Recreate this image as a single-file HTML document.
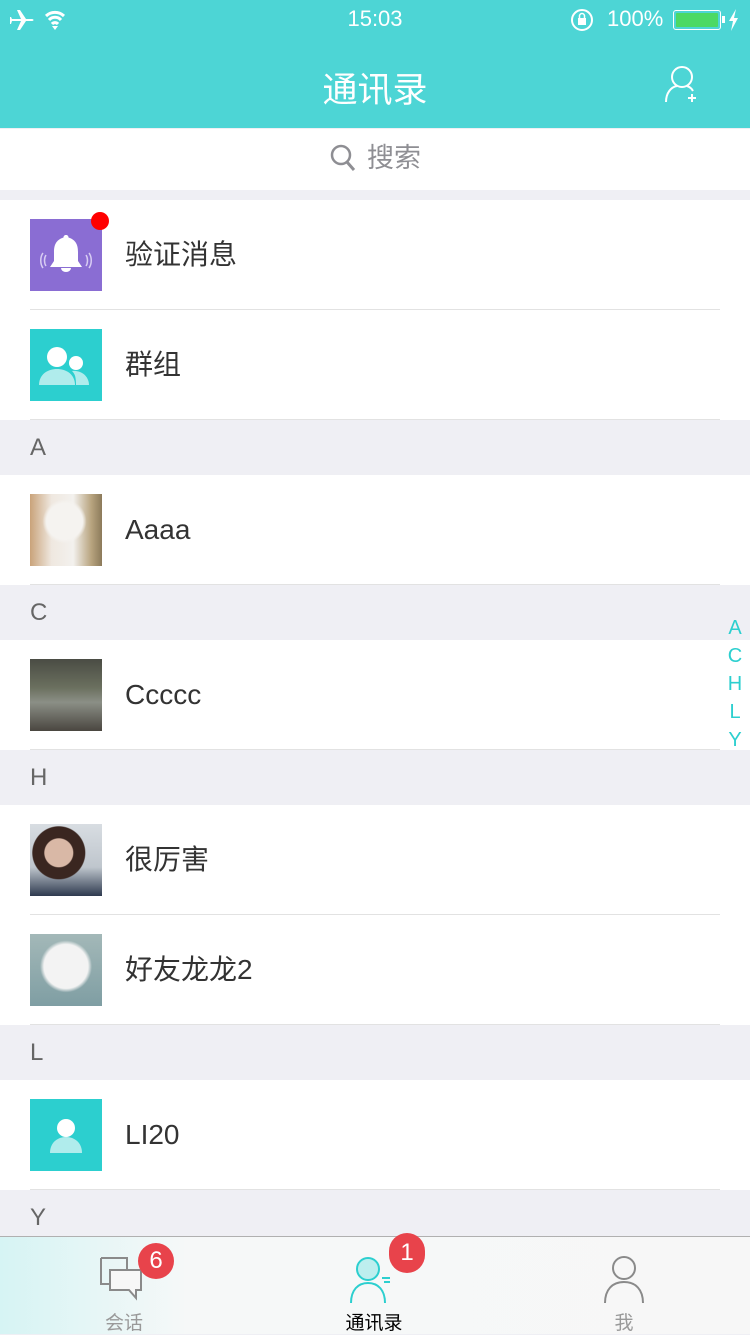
<!DOCTYPE html>
<html><head><meta charset="utf-8"><style>
*{margin:0;padding:0;box-sizing:border-box}
body{width:750px;height:1334px;overflow:hidden;background:#efeff4;font-family:"Liberation Sans","Noto Sans CJK SC",sans-serif;position:relative}
.top{position:absolute;left:0;top:0;width:750px;height:128px;background:#4dd5d5;color:#fff}
.search{position:absolute;top:129px;left:0;width:750px;height:61px;background:#fff;text-align:center;color:#8e8e93;font-size:27px;line-height:58px}
.row{position:absolute;left:0;width:750px;height:110px;background:#fff}
.row .av{position:absolute;left:30px;top:19px;width:72px;height:72px}
.row .t{position:absolute;left:125px;top:0;line-height:110px;font-size:28px;color:#333}
.row .ln{position:absolute;left:30px;right:30px;bottom:0;height:1px;background:#e2e2e2}
.hd{position:absolute;left:0;width:750px;height:55px;background:#efeff4;color:#666;font-size:24px;line-height:55px;padding-left:30px}
.idx{position:absolute;left:727px;top:614px;width:16px;text-align:center;color:#2ccfcf;font-size:20px;line-height:28px}
.tab{position:absolute;left:0;top:1236px;width:750px;height:98px;background:linear-gradient(90deg,#d6f4f4 0%,#f6f8f8 25%,#f7f7f7 100%);border-top:1px solid #b0b0b0}
.badge{position:absolute;width:36px;height:36px;border-radius:18px;background:#e8434b;color:#fff;font-size:24px;line-height:36px;text-align:center}
.tl{position:absolute;top:71px;font-size:19px;color:#999;width:100px;text-align:center}
</style></head><body>
<div class="top">
 <svg style="position:absolute;left:10px;top:8px" width="70" height="24" viewBox="0 0 70 24"><path d="M2 11h9l-4-9h3l6 9h6c2 0 2 2 0 2h-6l-6 9h-3l4-9H2l-1 3H0v-7h1z" fill="#fff"/><path d="M36 8a13 13 0 0 1 18 0M39 12a8 8 0 0 1 12 0M42 16a4 4 0 0 1 6 0" stroke="#fff" stroke-width="3" fill="none"/><path d="M45 22l-3-4h6z" fill="#fff"/></svg>
 <div style="position:absolute;left:0;width:750px;top:6px;text-align:center;font-size:22px">15:03</div>
 <svg style="position:absolute;left:570px;top:9px" width="26" height="24"><circle cx="12" cy="11" r="10" stroke="#fff" stroke-width="2" fill="none"/><rect x="8" y="9" width="8" height="7" fill="#fff"/><path d="M9.5 9V7a2.5 2.5 0 0 1 5 0v2" stroke="#fff" stroke-width="1.5" fill="none"/></svg>
 <div style="position:absolute;left:607px;top:6px;font-size:22px">100%</div>
 <div style="position:absolute;left:673px;top:10px;width:48px;height:20px;border:1px solid #fff;border-radius:3px;padding:2px"><div style="width:100%;height:100%;background:#4cd964;border-radius:1px"></div></div>
 <div style="position:absolute;left:722px;top:16px;width:3px;height:7px;background:#fff"></div>
 <svg style="position:absolute;left:728px;top:9px" width="12" height="22"><path d="M8 0L1 12h4l-2 10 7-13H6z" fill="#fff"/></svg>
 <div style="position:absolute;left:0;width:750px;top:62px;text-align:center;font-size:35px">通讯录</div>
 <svg style="position:absolute;left:662px;top:64px" width="42" height="42" viewBox="0 0 42 42"><circle cx="20" cy="13" r="10" stroke="#fff" stroke-width="2" fill="none"/><path d="M4 38c0-9 5-15 11-16M25 22c3 1 5 3 6 5M30 30v8M26 34h8" stroke="#fff" stroke-width="2" fill="none"/></svg>
</div>
<div class="search"><svg width="28" height="30" style="vertical-align:-6px;margin-right:10px"><circle cx="12" cy="12" r="9" stroke="#8e8e93" stroke-width="2.5" fill="none"/><path d="M18 19l7 8" stroke="#8e8e93" stroke-width="3"/></svg>搜索</div>

<div class="row" style="top:200px"><div class="av" style="background:#8a6dd3"><svg width="72" height="72"><path d="M36 16c-1.5 0-2.5 1-2.5 2.5C26 21 24 26 24 33v9l-4 6h32l-4-6v-9c0-7-2-12-9.5-14.5C38.5 17 37.5 16 36 16z" fill="#fff"/><path d="M31 49a5 4 0 0 0 10 0z" fill="#fff"/><path d="M16 36c-2 3-2 8 0 11M13 34c-3 4-3 11 0 15M56 36c2 3 2 8 0 11M59 34c3 4 3 11 0 15" stroke="#d8ccf3" stroke-width="1.5" fill="none"/></svg></div><div style="position:absolute;left:91px;top:12px;width:18px;height:18px;border-radius:9px;background:#f00"></div><div class="t">验证消息</div><div class="ln"></div></div>
<div class="row" style="top:310px"><div class="av" style="background:#2ccfcf"><svg width="72" height="72"><circle cx="27" cy="28" r="10" fill="#fff"/><circle cx="46" cy="34" r="7" fill="#fff"/><path d="M9 56c0-10 8-16 18-16s18 6 18 16z" fill="#b0ecec"/><path d="M46 56c0-8-1-11-4-14 9-1 17 5 17 14z" fill="#b0ecec"/></svg></div><div class="t">群组</div><div class="ln"></div></div>

<div class="hd" style="top:420px">A</div>
<div class="row" style="top:475px"><div class="av" style="background:radial-gradient(circle at 48% 38%,#f5f3f0 0 18px,transparent 22px),linear-gradient(90deg,#c9a37a 0%,#efe8e0 30%,#f3f1ee 60%,#b8a47f 85%,#8c7a5a 100%)"></div><div class="t">Aaaa</div><div class="ln"></div></div>
<div class="hd" style="top:585px">C</div>
<div class="row" style="top:640px"><div class="av" style="background:linear-gradient(180deg,#4a4c44 0%,#6b705f 40%,#8b8f86 60%,#4a4640 100%)"></div><div class="t">Ccccc</div><div class="ln"></div></div>
<div class="hd" style="top:750px">H</div>
<div class="row" style="top:805px"><div class="av" style="background:radial-gradient(circle at 40% 40%,#d9b8a6 0 14px,#3a2620 15px 26px,transparent 27px),linear-gradient(180deg,#d8dde2,#bfc6cd 60%,#2f3a4f 100%)"></div><div class="t">很厉害</div><div class="ln"></div></div>
<div class="row" style="top:915px"><div class="av" style="background:radial-gradient(circle at 50% 45%,#f3f3f3 0 22px,transparent 26px),linear-gradient(180deg,#a3b8b8,#7f9ea3)"></div><div class="t">好友龙龙2</div><div class="ln"></div></div>
<div class="hd" style="top:1025px">L</div>
<div class="row" style="top:1080px"><div class="av" style="background:#2ccfcf"><svg width="72" height="72"><circle cx="36" cy="29" r="9" fill="#fff"/><path d="M20 54c0-10 7-16 16-16s16 6 16 16z" fill="#b0ecec"/></svg></div><div class="t">LI20</div><div class="ln"></div></div>
<div class="hd" style="top:1190px">Y</div>

<div class="idx">A<br>C<br>H<br>L<br>Y</div>

<div class="tab">
 <svg style="position:absolute;left:98px;top:14px" width="50" height="52" viewBox="0 0 50 52"><path d="M3 7h26v13M3 7v26h10" stroke="#8a8a8a" stroke-width="2" fill="none"/><path d="M12 19h31v20h-5v8l-7-8H12z" stroke="#8a8a8a" stroke-width="2" fill="#f7f7f7"/></svg>
 <div class="badge" style="left:138px;top:6px">6</div>
 <div class="tl" style="left:74px;color:#999">会话</div>
 <svg style="position:absolute;left:346px;top:16px" width="50" height="52" viewBox="0 0 50 52"><circle cx="22" cy="16" r="11" stroke="#2ccfcf" stroke-width="2" fill="#bdeeee"/><path d="M5 50c0-13 7-20 17-20s17 7 17 20" stroke="#2ccfcf" stroke-width="2" fill="none"/><path d="M36 25h8M38 29h6" stroke="#2ccfcf" stroke-width="2"/></svg>
 <div class="badge" style="left:389px;top:-4px;width:36px;height:40px;border-radius:20px;line-height:40px">1</div>
 <div class="tl" style="left:324px;color:#000">通讯录</div>
 <svg style="position:absolute;left:600px;top:16px" width="50" height="52" viewBox="0 0 50 52"><circle cx="24" cy="15" r="11" stroke="#8a8a8a" stroke-width="2" fill="none"/><path d="M5 50c0-13 7-21 19-21s19 8 19 21" stroke="#8a8a8a" stroke-width="2" fill="none"/></svg>
 <div class="tl" style="left:574px;color:#999">我</div>
</div>
</body></html>
